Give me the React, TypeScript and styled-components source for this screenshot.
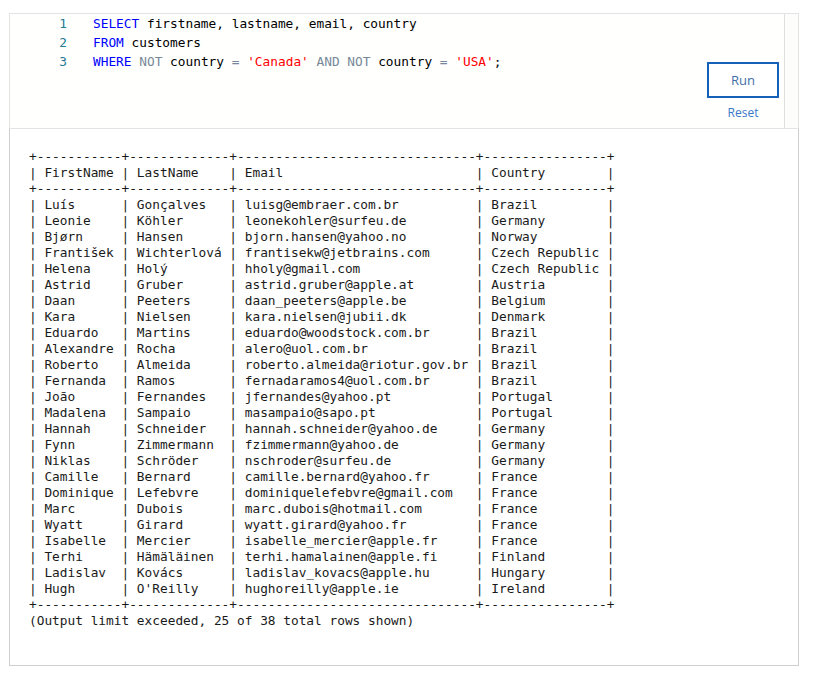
import styled, { createGlobalStyle } from 'styled-components';

const GlobalStyle = createGlobalStyle`
  html, body {
    margin: 0;
    padding: 0;
    background: #ffffff;
  }
`;

const MONO = `"DejaVu Sans Mono", "Liberation Mono", monospace`;

const Console = styled.div`
  margin: 13px 0 0 9px;
  width: 790px;
`;

const Editor = styled.div`
  display: flex;
  height: 114px;
  background: #fffffe;
  border: 1px solid #e3e3e3;
`;

const CodeArea = styled.div`
  flex: 1;
  font-family: ${MONO};
  font-size: 12.8px;
  line-height: 19px;
  color: #000000;
`;

const CodeLine = styled.div`
  display: flex;
  white-space: pre;
`;

const LineNo = styled.span`
  width: 57px;
  text-align: right;
  padding-right: 26px;
  color: #237893;
`;

const CodeText = styled.span`
  white-space: pre;
`;

const Token = styled.span<{ $kind?: 'kw' | 'op' | 'str' }>`
  color: ${(p) =>
    p.$kind === 'kw' ? '#0000ff' : p.$kind === 'op' ? '#778899' : p.$kind === 'str' ? '#ff0000' : '#000000'};
`;

const Actions = styled.div`
  display: flex;
  flex-direction: column;
  align-items: center;
  justify-content: flex-end;
  gap: 7px;
  padding: 0 5px 7px 0;
`;

const RunButton = styled.button`
  width: 72px;
  height: 36px;
  background: #ffffff;
  border: 2px solid #1560b8;
  color: #3d6eaa;
  font-family: "Open Sans", "Noto Sans", sans-serif;
  font-size: 13px;
  cursor: pointer;
`;

const ResetLink = styled.a`
  font-family: "Open Sans", "Noto Sans", sans-serif;
  font-size: 12px;
  line-height: 16px;
  color: #3a78c9;
  cursor: pointer;
`;

const ScrollGutter = styled.div`
  width: 13px;
  border-left: 1px solid #e0e0e0;
  background: #fdfdfb;
`;

const Output = styled.div`
  border: 1px solid #cfcfcf;
  border-top: none;
  background: #ffffff;
  padding: 20px 20px 36px 19px;
`;

const Result = styled.pre`
  margin: 0;
  font-family: ${MONO};
  font-size: 12.8px;
  line-height: 16px;
  color: #1a1a1a;
`;

const rows: [string, string, string, string][] = [
  ['Luís', 'Gonçalves', 'luisg@embraer.com.br', 'Brazil'],
  ['Leonie', 'Köhler', 'leonekohler@surfeu.de', 'Germany'],
  ['Bjørn', 'Hansen', 'bjorn.hansen@yahoo.no', 'Norway'],
  ['František', 'Wichterlová', 'frantisekw@jetbrains.com', 'Czech Republic'],
  ['Helena', 'Holý', 'hholy@gmail.com', 'Czech Republic'],
  ['Astrid', 'Gruber', 'astrid.gruber@apple.at', 'Austria'],
  ['Daan', 'Peeters', 'daan_peeters@apple.be', 'Belgium'],
  ['Kara', 'Nielsen', 'kara.nielsen@jubii.dk', 'Denmark'],
  ['Eduardo', 'Martins', 'eduardo@woodstock.com.br', 'Brazil'],
  ['Alexandre', 'Rocha', 'alero@uol.com.br', 'Brazil'],
  ['Roberto', 'Almeida', 'roberto.almeida@riotur.gov.br', 'Brazil'],
  ['Fernanda', 'Ramos', 'fernadaramos4@uol.com.br', 'Brazil'],
  ['João', 'Fernandes', 'jfernandes@yahoo.pt', 'Portugal'],
  ['Madalena', 'Sampaio', 'masampaio@sapo.pt', 'Portugal'],
  ['Hannah', 'Schneider', 'hannah.schneider@yahoo.de', 'Germany'],
  ['Fynn', 'Zimmermann', 'fzimmermann@yahoo.de', 'Germany'],
  ['Niklas', 'Schröder', 'nschroder@surfeu.de', 'Germany'],
  ['Camille', 'Bernard', 'camille.bernard@yahoo.fr', 'France'],
  ['Dominique', 'Lefebvre', 'dominiquelefebvre@gmail.com', 'France'],
  ['Marc', 'Dubois', 'marc.dubois@hotmail.com', 'France'],
  ['Wyatt', 'Girard', 'wyatt.girard@yahoo.fr', 'France'],
  ['Isabelle', 'Mercier', 'isabelle_mercier@apple.fr', 'France'],
  ['Terhi', 'Hämäläinen', 'terhi.hamalainen@apple.fi', 'Finland'],
  ['Ladislav', 'Kovács', 'ladislav_kovacs@apple.hu', 'Hungary'],
  ['Hugh', "O'Reilly", 'hughoreilly@apple.ie', 'Ireland'],
];

const header: [string, string, string, string] = ['FirstName', 'LastName', 'Email', 'Country'];

// ascii table like the sql console prints it
const buildTable = () => {
  const widths = header.map((h, i) => Math.max(h.length, ...rows.map((r) => r[i].length)));
  const rule = '+' + widths.map((w) => '-'.repeat(w + 2)).join('+') + '+';
  const line = (r: string[]) => '| ' + r.map((c, i) => c.padEnd(widths[i])).join(' | ') + ' |';
  return [rule, line(header), rule, ...rows.map(line), rule, '(Output limit exceeded, 25 of 38 total rows shown)'].join('\n');
};

export default function App() {
  return (
    <>
      <GlobalStyle />
      <Console>
        <Editor>
          <CodeArea>
            <CodeLine>
              <LineNo>1</LineNo>
              <CodeText>
                <Token $kind="kw">SELECT</Token>{' firstname, lastname, email, country'}
              </CodeText>
            </CodeLine>
            <CodeLine>
              <LineNo>2</LineNo>
              <CodeText>
                <Token $kind="kw">FROM</Token>{' customers'}
              </CodeText>
            </CodeLine>
            <CodeLine>
              <LineNo>3</LineNo>
              <CodeText>
                <Token $kind="kw">WHERE</Token>{' '}
                <Token $kind="op">NOT</Token>{' country '}
                <Token $kind="op">=</Token>{' '}
                <Token $kind="str">'Canada'</Token>{' '}
                <Token $kind="op">AND NOT</Token>{' country '}
                <Token $kind="op">=</Token>{' '}
                <Token $kind="str">'USA'</Token>;
              </CodeText>
            </CodeLine>
          </CodeArea>
          <Actions>
            <RunButton>Run</RunButton>
            <ResetLink>Reset</ResetLink>
          </Actions>
          <ScrollGutter />
        </Editor>
        <Output>
          <Result>{buildTable()}</Result>
        </Output>
      </Console>
    </>
  );
}
